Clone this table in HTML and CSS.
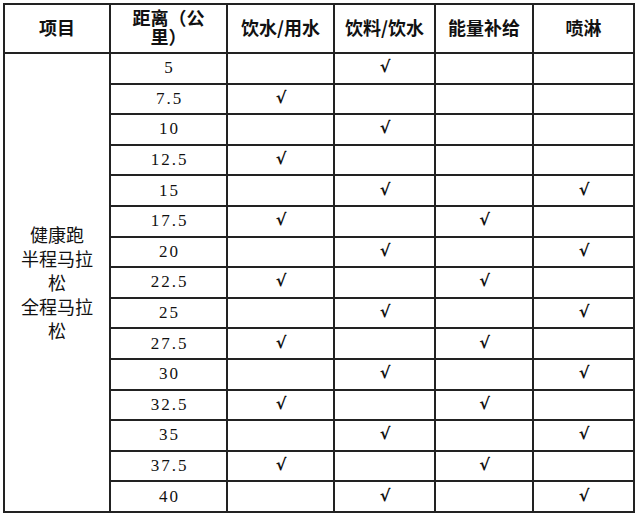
FILE: index.html
```html
<!DOCTYPE html>
<html lang="zh-CN">
<head>
<meta charset="utf-8">
<title>补给站设置</title>
<link rel="stylesheet" href="styles.css">
</head>
<body>
<table class="supply">
  <colgroup>
    <col class="c-item">
    <col class="c-dist">
    <col class="c-water">
    <col class="c-drink">
    <col class="c-energy">
    <col class="c-spray">
  </colgroup>
  <thead>
    <tr class="head-row">
      <th>项目</th>
      <th class="wrap">距离（公里）</th>
      <th>饮水/用水</th>
      <th>饮料/饮水</th>
      <th>能量补给</th>
      <th>喷淋</th>
    </tr>
  </thead>
  <tbody>
    <tr>
      <td class="item" rowspan="15">健康跑<br>半程马拉松<br>全程马拉松</td>
      <td class="dist">5</td><td></td><td class="ck">√</td><td></td><td></td>
    </tr>
    <tr><td class="dist">7.5</td><td class="ck">√</td><td></td><td></td><td></td></tr>
    <tr><td class="dist">10</td><td></td><td class="ck">√</td><td></td><td></td></tr>
    <tr><td class="dist">12.5</td><td class="ck">√</td><td></td><td></td><td></td></tr>
    <tr><td class="dist">15</td><td></td><td class="ck">√</td><td></td><td class="ck">√</td></tr>
    <tr><td class="dist">17.5</td><td class="ck">√</td><td></td><td class="ck">√</td><td></td></tr>
    <tr><td class="dist">20</td><td></td><td class="ck">√</td><td></td><td class="ck">√</td></tr>
    <tr><td class="dist">22.5</td><td class="ck">√</td><td></td><td class="ck">√</td><td></td></tr>
    <tr><td class="dist">25</td><td></td><td class="ck">√</td><td></td><td class="ck">√</td></tr>
    <tr><td class="dist">27.5</td><td class="ck">√</td><td></td><td class="ck">√</td><td></td></tr>
    <tr><td class="dist">30</td><td></td><td class="ck">√</td><td></td><td class="ck">√</td></tr>
    <tr><td class="dist">32.5</td><td class="ck">√</td><td></td><td class="ck">√</td><td></td></tr>
    <tr><td class="dist">35</td><td></td><td class="ck">√</td><td></td><td class="ck">√</td></tr>
    <tr><td class="dist">37.5</td><td class="ck">√</td><td></td><td class="ck">√</td><td></td></tr>
    <tr><td class="dist">40</td><td></td><td class="ck">√</td><td></td><td class="ck">√</td></tr>
  </tbody>
</table>
</body>
</html>
```

FILE: styles.css
```css
html, body {
  margin: 0;
  padding: 0;
  background: #ffffff;
}

body {
  padding: 3px 0 0 3px;
  font-family: "Noto Sans CJK SC", sans-serif;
  color: #111111;
}

.supply {
  border-collapse: collapse;
  table-layout: fixed;
  width: 630px;
}

.c-item { width: 106px; }
.c-dist { width: 117px; }
.c-water { width: 107px; }
.c-drink { width: 101px; }
.c-energy { width: 98px; }
.c-spray { width: 101px; }

.supply th,
.supply td {
  border: 2px solid #222222;
  text-align: center;
  vertical-align: middle;
  padding: 0 4px;
}

.head-row {
  height: 49px;
}

.supply th {
  font-family: "Noto Sans CJK SC", sans-serif;
  font-weight: 700;
  font-size: 18px;
  line-height: 19px;
  padding: 0 2px 2px;
  white-space: nowrap;
}

.supply th.wrap {
  white-space: normal;
  padding: 0 14px 4px;
}

.supply tbody tr {
  height: 30.6px;
}

.supply td.item {
  font-size: 18px;
  line-height: 24px;
  font-weight: 400;
  padding: 0 10px;
}

.supply td.dist {
  font-family: "Liberation Serif", serif;
  font-size: 17px;
  letter-spacing: 2px;
  padding: 0 0 0 2px;
  line-height: 20px;
}

.supply td.ck {
  font-family: "DejaVu Sans", sans-serif;
  font-size: 16px;
  font-weight: 700;
  line-height: 20px;
  padding: 0 0 2px 1px;
}
```
